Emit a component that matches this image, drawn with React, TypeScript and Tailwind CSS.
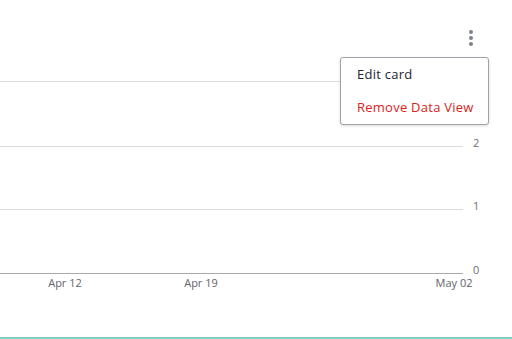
import React from "react";

export default function App() {
  const font = { fontFamily: "'Open Sans', Lato, sans-serif" };
  return (
    <div className="relative w-[512px] h-[339px] bg-white overflow-hidden" style={font}>
      <div className="flex flex-col h-[337px]">
        <div className="h-[56px] flex justify-end pt-[30px] pr-[39px]">
          <div className="flex flex-col gap-[2px] items-center">
            <span className="block w-[4px] h-[4px] rounded-full bg-[#7d838b]" />
            <span className="block w-[4px] h-[4px] rounded-full bg-[#7d838b]" />
            <span className="block w-[4px] h-[4px] rounded-full bg-[#7d838b]" />
          </div>
        </div>
        <div className="h-[26px] flex items-end">
          <div className="w-[463px] border-b border-[#dcdcdc]" />
          <span className="ml-[10px] mb-[-1px] text-[11px] leading-none text-[#6b6f76]">3</span>
        </div>
        <div className="h-[65px] flex items-end">
          <div className="w-[463px] border-b border-[#dcdcdc]" />
          <span className="ml-[10px] mb-[-1px] text-[11px] leading-none text-[#6b6f76]">2</span>
        </div>
        <div className="h-[63px] flex items-end">
          <div className="w-[463px] border-b border-[#dcdcdc]" />
          <span className="ml-[10px] mb-[-1px] text-[11px] leading-none text-[#6b6f76]">1</span>
        </div>
        <div className="h-[64px] flex items-end">
          <div className="w-[463px] border-b border-[#a9a9a9]" />
          <span className="ml-[10px] mb-[-1px] text-[11px] leading-none text-[#6b6f76]">0</span>
        </div>
        <div className="flex text-[11px] leading-none text-[#5f636a] pt-[3px]">
          <span className="ml-[35px] w-[60px] text-center">Apr 12</span>
          <span className="ml-[76px] w-[60px] text-center">Apr 19</span>
          <span className="ml-[193px] w-[60px] text-center">May 02</span>
        </div>
      </div>
      <div className="h-[2px] bg-[#7fcfc8]" />
      <div className="absolute left-[340px] top-[57px] w-[149px] h-[68px] bg-white border border-[#9ea3aa] rounded-[3px] shadow-[0_1px_3px_rgba(0,0,0,0.15)] flex flex-col pl-[16px] pt-[8px] text-[13px] tracking-[0.25px]">
        <span className="leading-[17px] text-[#1c2430]">Edit card</span>
        <span className="leading-[17px] mt-[16px] text-[#d9231b]">Remove Data View</span>
      </div>
    </div>
  );
}
